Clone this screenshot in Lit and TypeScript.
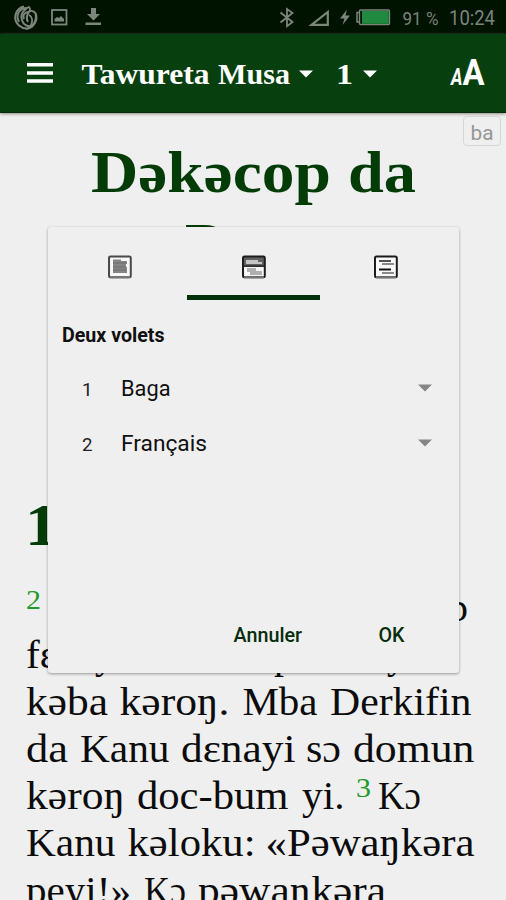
import { LitElement, html, svg, css } from "lit";
import { customElement, state } from "lit/decorators.js";

// One run of text: [text, x, advance width, css classes, baseline shift]
type Run = [string, number, number, string, number?];

// A line of text whose runs are fitted to given advance widths.
const line = (width: number, height: number, base: number, runs: Run[]) => html`
  <svg class="line" width=${width} height=${height} viewBox="0 0 ${width} ${height}">
    ${runs.map(
      ([t, x, w, c, dy = 0]) =>
        svg`<text x=${x} y=${base + dy} textLength=${w} lengthAdjust="spacingAndGlyphs" class=${c}>${t}</text>`
    )}
  </svg>`;

const caret = (c: string) => html`
  <svg class="caret ${c}" width="14" height="8" viewBox="0 0 14 8"><path d="M0 .5h14L7 7.5z" /></svg>`;

@customElement("app-root")
export class AppRoot extends LitElement {
  @state() private tab = 1;

  static styles = css`
    :host { display: block; height: 900px; overflow: hidden; position: relative; background: #efefef; }
    svg { display: block; flex: none; }
    .line { overflow: visible; }
    .status { height: 34px; background: #001200; display: flex; align-items: flex-start; box-sizing: border-box; padding-left: 13px; }
    .status svg { color: #7c867c; }
    .fill { flex: 1; }
    .bar { height: 79px; background: #083f0e; display: flex; align-items: flex-start; position: relative; border-bottom: 1px solid #062c09; box-shadow: 0 1px 3px #8c8c80; box-sizing: border-box; padding-left: 27px; }
    .st { font: 18.5px Roboto, sans-serif; fill: #7c847c; }
    .clock { font: 19.5px Roboto, sans-serif; fill: #7c847c; }
    .head { font: bold 29px "Liberation Serif", serif; fill: #fff; }
    .caret { fill: #fff; }
    .caret.grey { fill: #858585; }
    .bar .caret { margin-top: 35.5px; }
    .aa1 { font: italic bold 24px Roboto, sans-serif; fill: #fff; }
    .aa2 { font: bold 36px Roboto, sans-serif; fill: #fff; }
    .page { position: relative; height: 787px; }
    .tag { position: absolute; right: 5px; top: 3px; width: 38px; height: 30px; box-sizing: border-box; border: 1px solid #d6d6d6; border-radius: 4px; }
    .lang { font: 20px Roboto, sans-serif; fill: #969696; }
    .title { font: bold 59px "Liberation Serif", serif; fill: #043c08; }
    .body { font: 40.5px "Liberation Serif", serif; fill: #0c0c0c; }
    .verse { font: 28px "Liberation Serif", serif; fill: #209a28; }
    .dialog { position: absolute; left: 48px; top: 227px; width: 411px; height: 446px; background: #efefef; border-radius: 3px; box-shadow: 0 1px 3px rgba(0,0,0,.38); display: flex; flex-direction: column; }
    .tabs { display: grid; grid-template-columns: 139px 133px 139px; height: 72.500px; }
    .tab { display: flex; justify-content: center; padding-top: 27px; box-sizing: border-box; }
    .tab.first { padding-left: 5px; }
    .tab.last { padding-right: 7px; }
    .tab.on { border-bottom: 5px solid #03300a; }
    .label { font: bold 19.5px Roboto, sans-serif; fill: #101010; }
    .num { font: 19px Roboto, sans-serif; fill: #222; }
    .item { font: 22px Roboto, sans-serif; fill: #101010; }
    .row { display: flex; height: 55px; align-items: flex-start; }
    .row .caret { margin-top: 12.500px; }
    .btn { font: 500 19.5px Roboto, sans-serif; fill: #062d0c; }
  `;

  private status() {
    return html`<div class="status">
      <svg width="90" height="34" viewBox="13 0 90 34" fill="none" stroke="currentColor">
        <path d="M24 6.500A11 11 0 0 0 19 25.500Q23 29 28 28.500" stroke-width="2" />
        <path d="M19 22C15 14 20 8 27 8C22 12 20 16 22 20C23 24 26 26 30 26.500" stroke-width="2" />
        <path d="M24 19C22 15 25 12 29 12C27 15 26 19 28 22" stroke-width="2" />
        <path d="M28 6.500Q31 8 29.500 11Q34 10 36 14Q37.500 19 35 23Q32 28 28 28.500Q33 24 32 19Q31.500 16 29 15M35.500 14Q37 20 32 26" stroke-width="1.800" />
        <rect x="52" y="10" width="14.500" height="14.500" stroke-width="1.800" />
        <path d="M54.500 21.500V19L57 17L59 18L61 16L64 19V21.500z" fill="currentColor" stroke="none" />
        <path d="M91 8h5v6h4l-6.500 6.500L87 14h4zM85.500 22.500h15.500v2.500H85.500z" fill="currentColor" stroke="none" />
      </svg>
      <div class="fill"></div>
      <svg width="124" height="34" viewBox="275 0 124 34" fill="none" stroke="currentColor" stroke-width="1.800">
        <path d="M280.500 12.500L292.500 22L287 26.200V9L292.500 13L280.500 22.500" />
        <path d="M311.500 24.800H327.800V12z" stroke-width="2.200" />
        <path d="M347 9.500L340 18.500h4.500L342.500 25L350 15.500h-4.600z" fill="currentColor" stroke="none" />
        <path d="M360 12.500h-3v9.500h3" stroke-width="1.500" />
        <rect x="359.500" y="10" width="30" height="14.500" rx="1" stroke-width="1.400" />
        <path d="M362 11h26.800v12.800H362z" fill="#208a40" stroke="none" />
      </svg>
      ${line(107, 34, 24.5, [["91 %", 3.5, 36, "st"], ["10:24", 50, 46, "clock"]])}
    </div>`;
  }

  private toolbar() {
    return html`<div class="bar">
      <svg width="54" height="77" viewBox="0 0 54 77" fill="#fff">
        <path d="M0 29h26v3.600H0zM0 37.200h26v3.600H0zM0 45.200h26v3.600H0z" />
      </svg>
      ${line(218, 77, 49.6, [["Tawureta", 0.5, 128, "head"], ["Musa", 137, 72, "head"]])}
      ${caret("")}
      ${line(50, 77, 49.6, [["1", 23, 17, "head"]])}
      ${caret("")}
      <div class="fill"></div>
      ${line(60, 77, 50.7, [["A", 5, 11.5, "aa1"], ["A", 16.5, 22, "aa2"]])}
    </div>`;
  }

  private page() {
    const rows: Run[][] = [
      [["2", 26, 15, "verse", -12], ["ɔ", 450, 18, "body"]],
      [["fɛ", 26, 31, "body"], ["y", 95, 19, "body"], ["p", 274, 20, "body"], ["y", 387, 19, "body"]],
      [["kəba", 26, 82, "body"], ["kəroŋ.", 119.5, 110, "body"], ["Mba", 242.5, 75, "body"], ["Derkifin", 330, 141.5, "body"]],
      [["da", 26, 42, "body"], ["Kanu", 80, 89.5, "body"], ["dɛnayi", 181, 114.5, "body"], ["sɔ", 306, 35, "body"], ["domun", 353, 121.5, "body"]],
      [["kəroŋ", 26, 99, "body"], ["doc-bum", 137, 151.5, "body"], ["yi.", 302, 42.5, "body"], ["3", 356, 15, "verse", -12], ["Kɔ", 378, 43, "body"]],
      [["Kanu", 26, 89.5, "body"], ["kəloku:", 127.5, 128, "body"], ["«Pəwaŋkəra", 265.5, 209, "body"]],
      [["peyi!»", 26, 105, "body"], ["Kɔ", 144, 42, "body"], ["pəwaŋkəra", 198, 188, "body"]],
    ];
    return html`<div class="page">
      ${line(506, 94, 79, [["Dəkəcop", 91, 240, "title"], ["da", 348, 68, "title"]])}
      ${line(506, 280, 56.5, [["D", 185, 43, "title"]])}
      ${line(506, 101, 57.7, [["1", 25, 33, "title"]])}
      ${rows.map((r) => line(506, 47.1, 32.6, r))}
      <div class="tag">${line(36, 28, 22.5, [["ba", 6.5, 23, "lang"]])}</div>
    </div>`;
  }

  private icon(i: number) {
    const inner = [
      svg`<rect x="3" y="3" width="18" height="18" fill="#f8f8f8"/><path d="M5 4.500h8v1.500h6v3h-1v3h1v6H5z" fill="#858585"/><path d="M5 8h13M5 12h13M5 15h13" stroke="#666" stroke-width=".8"/>`,
      svg`<path d="M2 2h20v9H2z" fill="#606060"/><path d="M4 5h12v2h4v2H4z" fill="#c5c5c5"/><path d="M2 12h20v9H2z" fill="#f6f6f6"/><path d="M5 13h9v3h6v4H8v-3H5z" fill="#b0b0b0"/><path d="M1 11.200h22" stroke="#222" stroke-width="1.500"/>`,
      svg`<rect x="2" y="2" width="20" height="19" fill="#f9f9f9"/><path d="M5 6h12" stroke="#555" stroke-width="2"/><path d="M8 9h12M8 18h12" stroke="#8a8a8a" stroke-width="2"/><path d="M5 14.500h12" stroke="#111" stroke-width="2"/>`,
    ][i];
    return html`<svg width="24" height="25" viewBox="0 -1 24 25" fill="none">
      ${inner}
      <rect x="1" y="1.500" width="21.800" height="20.800" rx="1.500" stroke=${i ? "#1c1c1c" : "#4a4a4a"} stroke-width="2" />
      <path d="M2 22.300h20" stroke="#777" stroke-width="2" />
    </svg>`;
  }

  private dialog() {
    const langs: [string, number][] = [["Baga", 49.5], ["Français", 86]];
    return html`<div class="dialog">
      <div class="tabs">
        ${["first", "", "last"].map(
          (c, i) => html`<div class="tab ${c} ${this.tab === i ? "on" : ""}" @click=${() => (this.tab = i)}>${this.icon(i)}</div>`
        )}
      </div>
      ${line(411, 71.5, 41.5, [["Deux volets", 14, 102.5, "label"]])}
      ${langs.map(
        ([name, w], i) => html`<div class="row">
          ${line(370, 55, 24.6, [[String(i + 1), 34, 10.5, "num"], [name, 73, w, "item"]])}
          ${caret("grey")}
        </div>`
      )}
      <div class="fill"></div>
      ${line(411, 60, 29, [["Annuler", 185.5, 68.5, "btn"], ["OK", 330.5, 26, "btn"]])}
    </div>`;
  }

  render() {
    return html`${this.status()}${this.toolbar()}${this.page()}${this.dialog()}`;
  }
}
